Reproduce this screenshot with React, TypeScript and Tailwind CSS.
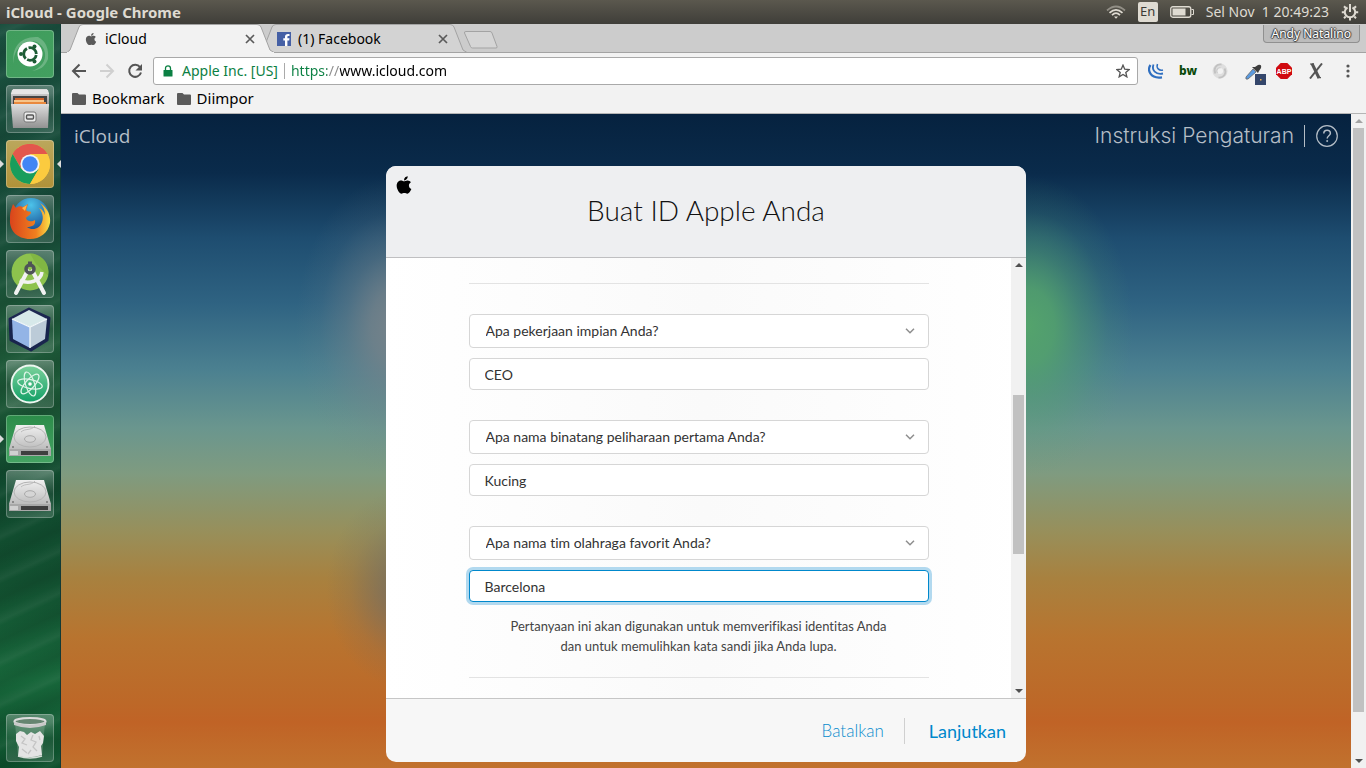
import React, { useId, useState } from "react";
import { FaApple } from "react-icons/fa";

const UI_FONT = "font-['Noto_Sans',sans-serif]";

/* ---------- Launcher icons ---------- */

function DashIcon() {
  return (
    <svg viewBox="0 0 48 48" className="size-12">
      <path d="M8 34C5 18 14 6 32 7c8 4 11 12 10 22-3 8-8 11-16 12 9-3 14-10 13-18C37 12 24 7 15 15c-5 5-8 11-7 19z" fill="#fff" opacity=".22" />
      <circle cx="24" cy="24" r="12.5" fill="#fff" />
      <circle cx="24" cy="24" r="6.3" fill="none" stroke="#1d5c35" strokeWidth="2.8" strokeDasharray="11.6 1.6" strokeDashoffset="-1" />
      <circle cx="15" cy="24" r="2" fill="#1d5c35" />
      <circle cx="28.5" cy="16.4" r="2" fill="#1d5c35" />
      <circle cx="28.5" cy="31.6" r="2" fill="#1d5c35" />
    </svg>
  );
}

function FilesIcon() {
  return (
    <svg viewBox="0 0 48 48" className="size-12">
      <defs>
        <linearGradient id="cab" x1="0" y1="0" x2="0" y2="1">
          <stop offset="0" stopColor="#dedede" />
          <stop offset="1" stopColor="#929292" />
        </linearGradient>
      </defs>
      <path d="M7 4h34l2 5v12H5V9z" fill="url(#cab)" />
      <path d="M6 5h36l1 4H5z" fill="#e6e6e6" />
      <path d="M7 11h34v9H7z" fill="#444" />
      <path d="M9 13h29v6H9z" fill="#d4652a" />
      <path d="M8 15h30v2H8z" fill="#f6c48a" />
      <path d="M8 17h32v3H8z" fill="#e9893e" />
      <path d="M5 19h38l-1 24H7z" fill="url(#cab)" />
      <rect x="18" y="27" width="12" height="10" rx="2" fill="#ececec" stroke="#777" />
      <rect x="20.5" y="30" width="7" height="4" rx="1" fill="#ddd" stroke="#555" strokeWidth="1.4" />
    </svg>
  );
}

function ChromeIcon() {
  return (
    <svg viewBox="0 0 48 48" className="size-12">
      <circle cx="24" cy="24" r="20" fill="#fbc93c" />
      <path d="M24 24 6.7 14A20 20 0 0 1 41.3 14z" fill="#e3574c" />
      <path d="M24 14H41.3A20 20 0 0 0 6.7 14l8.7 15z" fill="#e3574c" />
      <path d="M6.7 14A20 20 0 0 0 24 44l8.7-15L24 33l-8.7-4z" fill="#189d5c" />
      <path d="M24 44A20 20 0 0 0 41.3 14H24l8.7 15z" fill="#fbcb3f" />
      <circle cx="24" cy="24" r="9.6" fill="#f3f3f3" />
      <circle cx="24" cy="24" r="7.8" fill="#4285f4" />
    </svg>
  );
}

function FirefoxIcon() {
  return (
    <svg viewBox="0 0 48 48" className="size-12">
      <defs>
        <radialGradient id="globe" cx=".5" cy=".2" r=".8">
          <stop offset="0" stopColor="#4cc3ea" />
          <stop offset="1" stopColor="#123f88" />
        </radialGradient>
        <linearGradient id="fox" x1="0" y1="0" x2="1" y2="0">
          <stop offset="0" stopColor="#d9441c" />
          <stop offset=".65" stopColor="#f0801f" />
          <stop offset="1" stopColor="#fbe24a" />
        </linearGradient>
      </defs>
      <circle cx="25" cy="21" r="18" fill="url(#globe)" />
      <path d="M5 15l2-6 3 4c2-2 5-2 7-1l5-3-2 6c1 2 4 1 5 2 0 3-4 4-5 6 1 4 6 4 9 2 1 5-3 7-8 7 5 4 13 2 15-5 2-5 0-10-3-14 3 1 5 4 6 7 0-5-2-9-5-12 8 5 11 13 10 20-2 10-10 16-20 16C11 44 3 35 4 24c0-4 0-6 1-9z" fill="url(#fox)" />
      <path d="M16 13l5-3-2 6z" fill="#ffb347" />
    </svg>
  );
}

function AndroidStudioIcon() {
  return (
    <svg viewBox="0 0 48 48" className="size-12">
      <circle cx="24" cy="22" r="18.5" fill="#8dc24d" />
      <path d="M24 3.5a18.5 18.5 0 0 1 18 22L30 14z" fill="#79ad3e" opacity=".6" />
      <path d="M21.5 21 10 43M26.5 21 38 43" stroke="#f2f2f2" strokeWidth="4" strokeLinecap="round" />
      <path d="M14 30c8 5 21 1 22-8" fill="none" stroke="#f2f2f2" strokeWidth="3.5" />
      <circle cx="24" cy="19" r="4" fill="none" stroke="#4e5357" strokeWidth="3.5" />
      <path d="M22 11.500h4v4h-4z" fill="#4e5357" />
    </svg>
  );
}

function CubeIcon() {
  return (
    <svg viewBox="0 0 48 48" className="size-12">
      <path d="M23 4 43 13 41 35 25 45 5 35 4 14z" fill="#151a4e" stroke="#151a4e" strokeWidth="3" strokeLinejoin="round" opacity=".85" />
      <path d="M23 5 41 14 24 22 6 14z" fill="#d7e9ea" />
      <path d="M6 14 24 22V43L7 34z" fill="#93b4e6" />
      <path d="M24 22 41 14 39 34 24 43z" fill="#bccbd8" />
      <path d="M24 22v21M6 14l18 8 17-8" stroke="#f3f9fb" strokeWidth="1.3" fill="none" />
    </svg>
  );
}

function AtomIcon() {
  return (
    <svg viewBox="0 0 48 48" className="size-12">
      <defs>
        <linearGradient id="atom" x1="0" y1="0" x2="0" y2="1">
          <stop offset="0" stopColor="#7cd29c" />
          <stop offset="1" stopColor="#129f66" />
        </linearGradient>
      </defs>
      <circle cx="24" cy="24" r="18.5" fill="url(#atom)" stroke="#eef7f1" strokeWidth="1.8" />
      <g fill="none" stroke="#dff5e8" strokeWidth="1.2">
        <ellipse cx="24" cy="24" rx="12.5" ry="4.5" transform="rotate(12 24 24)" />
        <ellipse cx="24" cy="24" rx="12.5" ry="4.5" transform="rotate(72 24 24)" />
        <ellipse cx="24" cy="24" rx="12.5" ry="4.5" transform="rotate(132 24 24)" />
      </g>
      <circle cx="24" cy="24" r="1.8" fill="#fff" />
    </svg>
  );
}

function DriveIcon() {
  const id = useId();
  return (
    <svg viewBox="0 0 48 48" className="size-12">
      <defs>
        <linearGradient id={id} x1="0" y1="0" x2="0" y2="1">
          <stop offset="0" stopColor="#f0f0f0" />
          <stop offset="1" stopColor="#bdbdbd" />
        </linearGradient>
      </defs>
      <path d="M10 10h28l7 24H3z" fill={`url(#${id})`} />
      <path d="M3 34h42v7H3z" fill="#a8a8a8" />
      <path d="M15 36h27v4H15z" fill="#3f3f3f" />
      <path d="M4 36h8v4H4z" fill="#d0d0d0" />
      <ellipse cx="24" cy="22" rx="16" ry="10" fill="none" stroke="#b3b3b3" />
      <ellipse cx="24" cy="24" rx="5.5" ry="3.3" fill="#d5d5d5" stroke="#aaa" />
      <path d="M29 11c-4 5-10 2-14 6" fill="none" stroke="#bcbcbc" />
      <circle cx="7" cy="32" r="1" fill="#777" />
      <circle cx="41" cy="32" r="1" fill="#777" />
    </svg>
  );
}

function TrashIcon() {
  return (
    <svg viewBox="0 0 48 48" className="size-12">
      <path d="M9 9h30l-3 33q-12 3-24 0z" fill="#dfe9e2" opacity=".2" />
      <path d="M10 20l4-3 4 1 3 3 4-3 4 2 5-3 4 5-1 7-2 3 1 9q-12 4-24 1l1-9-3-6z" fill="#e4e4e4" />
      <path d="M15 22l4 3-3 4 5 2M27 21l-2 5 5 2-3 5 4 4M33 22l1 4M16 35l5 4M22 40l3-4" fill="none" stroke="#c4c4c4" strokeWidth="1.3" />
      <path d="M12 42q12 4 24 0" fill="none" stroke="#d5ddd7" strokeWidth="1.5" />
      <ellipse cx="24" cy="7.5" rx="15.5" ry="3.5" fill="#668571" stroke="#dcdcdc" strokeWidth="2.2" />
      <path d="M8 8q16 6 32 0v3q-16 6-32 0z" fill="#c9c9c9" />
    </svg>
  );
}

type Tile = { name: string; icon: React.ReactNode; tone: string; running?: boolean; focused?: boolean };

const GLASS = "bg-linear-to-b from-white/30 via-white/5 to-white/15";

const tiles: Tile[] = [
  { name: "Dash", icon: <DashIcon />, tone: "bg-linear-to-br from-[#3f9c5c] to-[#43a060]" },
  { name: "Files", icon: <FilesIcon />, tone: GLASS },
  { name: "Google Chrome", icon: <ChromeIcon />, tone: "bg-linear-to-b from-[#bba75c] to-[#b09238]", running: true, focused: true },
  { name: "Firefox", icon: <FirefoxIcon />, tone: GLASS },
  { name: "Android Studio", icon: <AndroidStudioIcon />, tone: GLASS },
  { name: "NetBeans", icon: <CubeIcon />, tone: GLASS },
  { name: "Atom", icon: <AtomIcon />, tone: GLASS },
  { name: "Drive 1", icon: <DriveIcon />, tone: "bg-linear-to-b from-[#2c8c4a] to-[#45a463]", running: true },
  { name: "Drive 2", icon: <DriveIcon />, tone: GLASS },
];

function LauncherTile({ tile }: { tile: Tile }) {
  return (
    <button aria-label={tile.name} className={`relative size-12 rounded-[4px] ring-1 ring-inset ring-white/25 ${tile.tone}`}>
      {tile.icon}
      {tile.running && <span className="absolute top-5 -left-1.5 border-y-4 border-l-4 border-y-transparent border-l-[#dcdcdc]" />}
      {tile.focused && <span className="absolute top-5 -right-[7px] border-y-4 border-r-4 border-y-transparent border-r-[#dcdcdc]" />}
    </button>
  );
}

function Launcher() {
  return (
    <nav aria-label="Launcher" className="flex w-[61px] shrink-0 flex-col gap-[7px] border-r border-[#123a35] bg-[repeating-linear-gradient(155deg,transparent_0,#ffffff0c_9px,transparent_14px,#00000014_27px,transparent_38px),linear-gradient(to_bottom,#1a4f3e_0%,#164a38_25%,#1d5838_42%,#1a5434_52%,#10492e_62%,#125030_75%,#17663a_88%,#0d4f2c_100%)] p-1.5">
      {tiles.map((t) => (
        <LauncherTile key={t.name} tile={t} />
      ))}
      <div className="mt-auto flex">
        <LauncherTile tile={{ name: "Trash", icon: <TrashIcon />, tone: GLASS }} />
      </div>
    </nav>
  );
}

/* ---------- System panel ---------- */

function TopPanel() {
  return (
    <header className="flex h-6 shrink-0 items-center justify-between bg-linear-to-b from-[#5b584e] to-[#3f3e39] pr-[7px] pl-1.5 text-[#dfdbd2]">
      <div className="text-[15px] leading-6 font-bold">iCloud - Google Chrome</div>
      <div className="flex items-center gap-3">
        <svg viewBox="0 0 20 16" className="h-4 w-5" fill="none" stroke="#dfdbd2" strokeWidth="1.7">
          <path d="M1 6.5Q10-1.5 19 6.5" opacity=".45" />
          <path d="M3.5 8.8Q10 2.8 16.5 8.8" />
          <path d="M6 11.2Q10 7.2 14 11.2" />
          <path d="M8 12.5h4l-2 2.3z" fill="#dfdbd2" stroke="none" />
        </svg>
        <div className="flex h-5 w-5 items-center justify-center rounded-xs bg-[#dfdbd2] text-[13px] text-[#3c3b37]">En</div>
        <svg viewBox="0 0 24 12" className="h-3 w-6">
          <rect x=".75" y=".75" width="20" height="10.5" rx="2" fill="none" stroke="#dfdbd2" strokeWidth="1.3" />
          <rect x="2.5" y="2.5" width="13" height="7" fill="#dfdbd2" />
          <path d="M21.5 3.5h2v5h-2" fill="none" stroke="#dfdbd2" />
        </svg>
        <div className="text-sm whitespace-pre">Sel Nov  1 20:49:23</div>
        <svg viewBox="0 0 18 18" className="size-[18px]" fill="none" stroke="#dfdbd2" strokeWidth="2">
          <path d="M6.5 4.5a5.200 5.200 0 1 0 5 0" />
          <path d="M9 1v8" />
          <path d="M3 3.300l1.700 1.700M15 3.300 13.300 5M.8 9.200h2.700M14.500 9.200h2.700M3 15.200l1.700-1.700M15 15.200l-1.700-1.700M9 14.700v2.700" />
        </svg>
      </div>
    </header>
  );
}

/* ---------- Browser chrome ---------- */

function Tab({ title, icon, active }: { title: string; icon: React.ReactNode; active?: boolean }) {
  return (
    <div className={`relative -ml-[14px] flex h-[29px] w-[207px] items-center ${active ? "z-10" : ""}`}>
      <svg viewBox="0 0 207 29" className="absolute inset-0 h-full w-full">
        <path d="M0 28.5 3 26 12 3Q13 .5 16 .5H190Q193 .5 194 3L203 26 207 28.5" fill={active ? "#f2f2f2" : "#d3d3d3"} stroke="#a3a3a3" />
        {active && <path d="M0 28.5H207" stroke="#f2f2f2" />}
        {!active && <path d="M0 28.5H207" stroke="#a3a3a3" />}
      </svg>
      <button className="relative flex flex-1 items-center gap-[7px] pl-[17px] text-left text-sm text-black">
        {icon}
        {title}
      </button>
      <button aria-label={`Close ${title}`} className="relative mr-[19px]">
        <svg viewBox="0 0 10 10" className="size-2.5" stroke="#5a5a5a" strokeWidth="1.7">
          <path d="M1 1l8 8M9 1 1 9" />
        </svg>
      </button>
    </div>
  );
}

function TabStrip() {
  return (
    <div className="flex h-[29px] items-start bg-[#ccc] pl-5 shadow-[inset_0_-1px_#a3a3a3]">
      <Tab active title="iCloud" icon={<FaApple className="size-3.5 text-[#5a5a5a]" />} />
      <Tab
        title="(1) Facebook"
        icon={
          <svg viewBox="0 0 14 14" className="size-3.5">
            <path d="M0 0h14v14H0z" fill="#4560a5" />
            <path d="M8 14V8.5H6.3V6.3H8V4.8C8 2.9 9.2 2 11 2h1.5v2.1h-1c-.9 0-1.1.4-1.1 1.1v1.1h2.1l-.3 2.2h-1.8V14z" fill="#fff" />
          </svg>
        }
      />
      <button aria-label="New tab" className="-ml-1 mt-[7px]">
        <svg viewBox="0 0 36 18" className="h-[18px] w-9" fill="#d5d5d5" stroke="#a3a3a3">
          <path d="M3 .5H27Q28.5.5 29 2L34 15.5Q34.5 17 33 17H9.5Q8 17 7.5 15.5L1.5 2Q1 .5 3 .5z" />
        </svg>
      </button>
      <button className="mt-px mr-1.5 ml-auto h-[18px] rounded-b-sm border border-t-0 border-[#909090] bg-[#bcbcbc] px-2 text-xs text-white [text-shadow:0_1px_1px_#333,1px_0_1px_#444,-1px_0_1px_#444,0_-1px_1px_#444]">
        Andy Natalino
      </button>
    </div>
  );
}

function Folder({ label }: { label: string }) {
  return (
    <button className="flex items-center gap-1.5">
      <svg viewBox="0 0 14 12" className="h-3 w-3.5">
        <path d="M1 0h4.5L7 1.5h6q1 0 1 1V11q0 1-1 1H1q-1 0-1-1V1q0-1 1-1z" fill="#5a5a5a" />
      </svg>
      {label}
    </button>
  );
}

function Toolbar() {
  const [url, setUrl] = useState("https://www.icloud.com");
  return (
    <div className="border-b border-[#b5b5b5] bg-[#f2f2f2] text-sm text-black">
      <div className="flex items-center pt-1 pr-2.5 pl-2.5">
        <div className="flex shrink-0 items-center gap-3">
          <button aria-label="Back">
            <svg viewBox="0 0 16 16" className="size-4" fill="none" stroke="#555" strokeWidth="2">
              <path d="M15 8H2M8.5 1.5 2 8l6.5 6.5" />
            </svg>
          </button>
          <button aria-label="Forward">
            <svg viewBox="0 0 16 16" className="size-4" fill="none" stroke="#d0d0d0" strokeWidth="2">
              <path d="M1 8h13M7.5 1.5 14 8l-6.5 6.5" />
            </svg>
          </button>
          <button aria-label="Reload">
            <svg viewBox="0 0 16 16" className="size-4">
              <path d="M13 4.2A6 6 0 1 0 14 9.5" fill="none" stroke="#555" strokeWidth="2" />
              <path d="M15 1v6.5H8.5z" fill="#555" />
            </svg>
          </button>
        </div>
        <div className="ml-2.5 flex h-7 flex-1 items-center rounded-[3px] border border-[#a9a9a9] bg-white px-2">
          <svg viewBox="0 0 10 12" className="mx-px h-3 w-2.5">
            <path d="M1 5h8q.5 0 .5.5v5.5q0 .5-.5.5H1q-.5 0-.5-.5V5.5Q.5 5 1 5z" fill="#0b8043" />
            <path d="M2.5 5.5V3.3a2.5 2.5 0 0 1 5 0v2.2" fill="none" stroke="#0b8043" strokeWidth="1.3" />
          </svg>
          <button className="ml-2 shrink-0 border-r border-[#aaa] pr-1.5 leading-4 text-[#0b8043]">Apple Inc. [US]</button>
          <input
            aria-label="Address"
            value={url}
            onChange={(e) => setUrl(e.target.value)}
            className="ml-1.5 min-w-0 flex-1 bg-[linear-gradient(to_right,#0b8043_0_36px,#8a8a8a_36px_49px,#000_49px)] bg-clip-text text-transparent outline-none"
          />
          <button aria-label="Bookmark this page">
            <svg viewBox="0 0 16 16" className="-mr-px size-3.5" fill="none" stroke="#555" strokeWidth="1.5">
              <path d="M8 1.3l2 4.7 5 .4-3.8 3.3 1.2 5L8 12l-4.4 2.7 1.2-5L1 6.4 6 6z" />
            </svg>
          </button>
        </div>
        <div className="ml-2.5 flex shrink-0 items-center gap-4">
          <button aria-label="jQuery">
            <svg viewBox="0 0 16 16" className="size-4" fill="none" stroke="#2f6fc0">
              <path d="M2.500 2C-1 7 2 16 14 14.300" strokeWidth="2.200" />
              <path d="M5.500 1.500C3.500 7 7.500 12 15 10.500" strokeWidth="1.800" />
              <path d="M9.500 1C8 5 11 8 15 7" strokeWidth="1.500" />
            </svg>
          </button>
          <button className="flex w-4 justify-center text-xs leading-4 font-extrabold text-[#0a4a0a]">bw</button>
          <button aria-label="Sync">
            <svg viewBox="0 0 16 16" className="size-4" fill="none">
              <circle cx="8" cy="8" r="5.300" stroke="#dedede" strokeWidth="4.500" />
              <path d="M9.500 1.500C4 1 1 6 3.500 10.500M6.500 14.500C12 15 15 10 12.500 5.500" stroke="#c2c2c2" strokeWidth="1.800" />
              <path d="M5.500 10a3.200 3.200 0 0 1 3-5.200" stroke="#cacaca" strokeWidth="1.200" />
            </svg>
          </button>
          <button aria-label="Color picker">
            <svg viewBox="0 0 22 22" className="-mr-1.5 -mb-1.5 size-[22px]">
              <path d="M2 14 9 6l3 3-8 7q-3 1-2-2z" fill="#5a9ae0" stroke="#666" strokeWidth=".8" />
              <path d="M8 4l6 6 1-2 2-3q1-4-3-3l-3 2z" fill="#3d3d3d" />
              <path d="M11 11h11v11H11z" fill="#34466b" />
              <path d="M16 16h1.5v1.5H16z" fill="#f0b050" />
            </svg>
          </button>
          <button aria-label="Adblock Plus">
            <svg viewBox="0 0 16 16" className="size-4">
              <path d="M4.7 0h6.6L16 4.7v6.6L11.3 16H4.7L0 11.3V4.7z" fill="#d00a10" />
              <text x="8" y="10.7" textAnchor="middle" fontSize="7" fontWeight="700" fill="#fff" fontFamily="Liberation Sans, sans-serif">ABP</text>
            </svg>
          </button>
          <button aria-label="Extension">
            <svg viewBox="0 0 16 16" className="size-4" fill="none" stroke="#555">
              <path d="M4 .5l7 14.500" strokeWidth="3" />
              <path d="M2 1h4M9.500 14.700H13" strokeWidth="1.200" />
              <path d="M14 .5 2 15.500" strokeWidth="2" />
            </svg>
          </button>
          <button aria-label="Menu">
            <svg viewBox="0 0 16 16" className="size-4" fill="#555">
              <circle cx="8" cy="3" r="1.6" />
              <circle cx="8" cy="8" r="1.6" />
              <circle cx="8" cy="13" r="1.6" />
            </svg>
          </button>
        </div>
      </div>
      <div className="flex h-7 items-center gap-3 pl-[11px] text-[15px]">
        <Folder label="Bookmark" />
        <Folder label="Diimpor" />
      </div>
    </div>
  );
}

/* ---------- Page ---------- */

function ScrollTrack({ before, thumb, after, muted }: { before: string; thumb: string; after: string; muted?: boolean }) {
  return (
    <div aria-hidden className="flex w-[15px] shrink-0 flex-col items-center bg-[#f1f1f1]">
      <span className={`my-[5px] border-x-4 border-b-4 border-x-transparent ${muted ? "border-b-[#a3a3a3]" : "border-b-[#505050]"}`} />
      <span className={before} />
      <span className={`w-[11px] bg-[#c1c1c1] ${thumb}`} />
      <span className={after} />
      <span className="my-[5px] border-x-4 border-t-4 border-x-transparent border-t-[#505050]" />
    </div>
  );
}

const questions = [
  { id: "q1", question: "Apa pekerjaan impian Anda?", answer: "CEO" },
  { id: "q2", question: "Apa nama binatang peliharaan pertama Anda?", answer: "Kucing" },
  { id: "q3", question: "Apa nama tim olahraga favorit Anda?", answer: "Barcelona", focused: true },
];

function SecurityQuestion({ id, question, answer, focused }: { id: string; question: string; answer: string; focused?: boolean }) {
  const [value, setValue] = useState(answer);
  return (
    <div className="flex flex-col gap-2.5">
      <div className="relative">
        <select aria-label="Pertanyaan keamanan" className="h-[34px] w-full appearance-none rounded-sm border border-[#d6d6d6] bg-white px-4 text-sm text-[#333] outline-none">
          <option>{question}</option>
        </select>
        <svg viewBox="0 0 10 6" className="pointer-events-none absolute top-[14px] right-3.5 h-1.5 w-2.5" fill="none" stroke="#8e8e8e" strokeWidth="1.5">
          <path d="M1 .8l4 4 4-4" />
        </svg>
      </div>
      <input
        id={id}
        aria-label={`Jawaban: ${question}`}
        value={value}
        onChange={(e) => setValue(e.target.value)}
        className={`h-8 w-full rounded-sm border bg-white px-[15px] text-sm text-[#333] outline-none ${focused ? "border-[#0088cc] shadow-[0_0_0_3px_#b2d9ef]" : "border-[#d6d6d6]"}`}
      />
    </div>
  );
}

function Dialog() {
  return (
    <section aria-labelledby="dialog-title" className="flex min-h-0 w-full max-w-[640px] flex-1 flex-col overflow-hidden rounded-[10px] bg-[#f7f7f7] font-['Lato',sans-serif] [font-variant-ligatures:none]">
      <header className="relative flex h-[92px] shrink-0 items-center justify-center border-b border-[#bfbfc1] bg-[#eeeff1] pb-1">
        <FaApple className="absolute top-[9px] left-2 size-5 text-black" />
        <h1 id="dialog-title" className="text-[28px] leading-9 font-light text-[#111]">Buat ID Apple Anda</h1>
      </header>
      <div className="flex min-h-0 flex-1 bg-[linear-gradient(to_right,#fff,#fafafa_50%,#fff)]">
        <div className="flex min-w-0 flex-1 flex-col items-center overflow-hidden">
          <div className="mt-[25px] w-[460px] max-w-full border-y border-[#e3e3e3] pt-[30px] pb-[21px]">
            <div className="flex flex-col gap-[30px]">
              {questions.map((q) => (
                <SecurityQuestion key={q.id} {...q} />
              ))}
            </div>
            <p className="mt-3.5 text-center text-[13px] leading-5 text-[#444]">
              Pertanyaan ini akan digunakan untuk memverifikasi identitas Anda
              <br />
              dan untuk memulihkan kata sandi jika Anda lupa.
            </p>
          </div>
        </div>
        <ScrollTrack before="flex-[123]" thumb="flex-[159]" after="flex-[130]" />
      </div>
      <footer className="flex h-16 shrink-0 items-center justify-end border-t border-[#c6c6c6] pr-5">
        <button className="mr-5 text-[17px] font-light text-[#0a8ccd]">Batalkan</button>
        <button className="border-l border-[#d0d0d0] pl-6 text-lg leading-[26px] text-[#0088cc]">Lanjutkan</button>
      </footer>
    </section>
  );
}

function WebPage() {
  return (
    <div className="flex min-h-0 flex-1">
      <main className="flex min-w-0 flex-1 flex-col bg-[radial-gradient(ellipse_105px_150px_at_calc(50%_+_322px)_212px,#54a36c_0%,#54a36cdd_25%,#54a36c77_50%,#54a36c22_76%,#54a36c00_100%),radial-gradient(ellipse_100px_150px_at_calc(50%_-_310px)_212px,#77838a_0%,#77838acc_25%,#77838a66_50%,#77838a1c_76%,#77838a00_100%),radial-gradient(ellipse_80px_100px_at_calc(50%_-_300px)_475px,#5d6670aa_0%,#5d667077_30%,#5d667022_70%,#5d667000_100%),linear-gradient(to_bottom,#06223f_0%,#0a2b4b_9%,#1e4d70_19%,#2f6382_29%,#4b8090_39%,#6a968e_48%,#7f9b80_55%,#988f5a_64%,#a8813f_71%,#b8742f_80%,#bd6828_90%,#c06326_93%,#c1722e_100%)]">
        <div className="flex h-[52px] shrink-0 items-center justify-between pb-2 pl-[13px] text-[#b4bdc6]">
          <a href="#home" className="font-['Open_Sans',sans-serif] text-[19px] leading-7 font-medium">iCloud</a>
          <div className="flex items-center pr-[13px]">
            <a href="#setup" className="mr-2.5 font-['Inter',sans-serif] text-[21px] leading-7 font-light">Instruksi Pengaturan</a>
            <span className="h-[22px] border-l border-[#b4bdc6]" />
            <button aria-label="Bantuan" className="ml-[11px]">
              <svg viewBox="0 0 22 22" className="size-[22px]" fill="none" stroke="#b4bdc6">
                <circle cx="11" cy="11" r="10.3" strokeWidth="1.2" />
                <path d="M7.8 8.5c0-4.3 6.6-4.3 6.600-.3 0 2.500-3.200 2.700-3.200 5.300" strokeWidth="1.5" />
                <circle cx="11.2" cy="16" r=".6" fill="#b4bdc6" />
              </svg>
            </button>
          </div>
        </div>
        <div className="flex min-h-0 flex-1 justify-center pb-1.5">
          <Dialog />
        </div>
      </main>
      <ScrollTrack muted before="flex-none" thumb="flex-[583]" after="flex-[42]" />
    </div>
  );
}

export default function App() {
  return (
    <div className={`flex h-screen flex-col overflow-hidden ${UI_FONT}`}>
      <TopPanel />
      <div className="flex min-h-0 flex-1">
        <Launcher />
        <div className="flex min-w-0 flex-1 flex-col">
          <TabStrip />
          <Toolbar />
          <WebPage />
        </div>
      </div>
    </div>
  );
}
